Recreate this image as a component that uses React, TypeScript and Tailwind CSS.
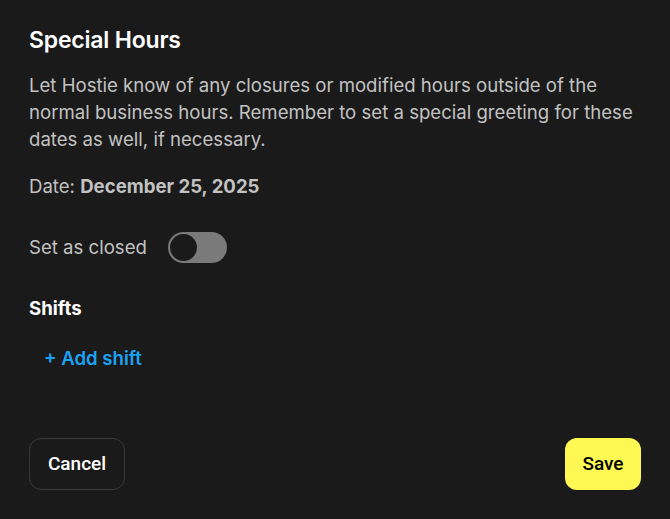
import React from "react";

export default function App() {
  return (
    <div className="w-[670px] h-[519px] bg-[#1a1a1a] flex flex-col pl-[29px] pr-[24px] pt-[24px] pb-[29px] font-['Inter',sans-serif]">
      <h1 className="text-[23px] leading-[32px] font-semibold text-white tracking-[-0.2px]">Special Hours</h1>
      <p className="mt-[16px] text-[18.6px] leading-[27px] text-[#c2c2c2]">
        Let Hostie know of any closures or modified hours outside of the normal business hours. Remember to set a special greeting for these dates as well, if necessary.
      </p>
      <p className="mt-[20px] text-[18.6px] leading-[27px] text-[#c2c2c2]">
        Date: <span className="font-bold">December 25, 2025</span>
      </p>
      <div className="mt-[32px] flex items-center gap-[21px]">
        <span className="text-[18.6px] leading-[27px] text-[#c2c2c2]">Set as closed</span>
        <div className="w-[59px] h-[31px] rounded-full bg-[#7a7a7a] flex items-center px-[2px]">
          <div className="w-[27px] h-[27px] rounded-full bg-[#1a1a1a]" />
        </div>
      </div>
      <h2 className="mt-[32px] text-[18.6px] leading-[27px] font-bold text-white">Shifts</h2>
      <button className="mt-[23px] self-start ml-[15px] text-[18.6px] leading-[27px] font-semibold text-[#1aa3f5]">+ Add shift</button>
      <div className="mt-auto flex justify-between items-end pr-[5px]">
        <button className="h-[52px] w-[96px] rounded-[12px] border border-[#3a3a3a] text-white text-[19px] font-medium font-['Roboto',sans-serif]">Cancel</button>
        <button className="h-[52px] w-[76px] rounded-[12px] bg-[#fff752] text-black text-[19px] font-medium font-['Roboto',sans-serif]">Save</button>
      </div>
    </div>
  );
}
